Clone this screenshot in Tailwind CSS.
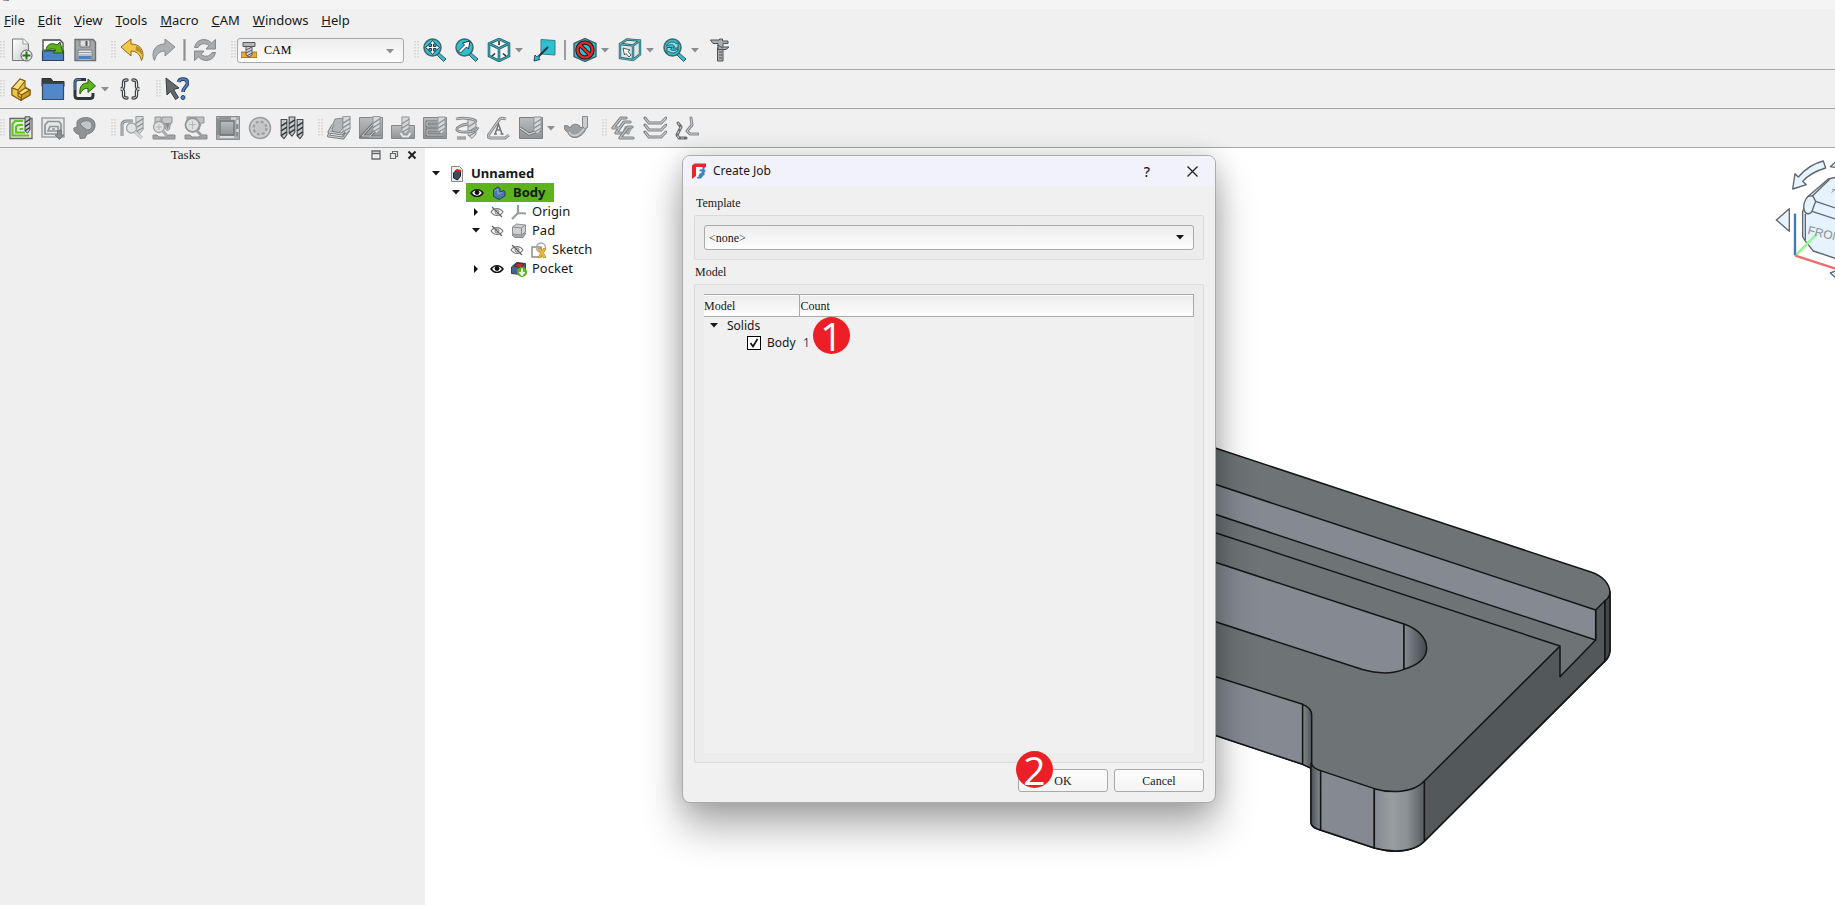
<!DOCTYPE html>
<html lang="en">
<head>
    <meta charset="UTF-8">
    <meta name="viewport" content="width=device-width, initial-scale=1.0">
    <title>CAM - Create Job</title>
    <script src="https://cdn.jsdelivr.net/npm/@tailwindcss/browser@4"></script>
</head>
<body class="relative flex flex-col min-h-screen overflow-hidden bg-[#f0f0f0] text-[13px] text-[#16181a] font-['Noto_Sans',sans-serif]">

    <!-- shared shapes -->
    <svg class="absolute size-0">
        <defs>
            <linearGradient id="page" x1="0" y1="0" x2="1" y2="1"><stop offset="0" stop-color="#fff"/><stop offset="1" stop-color="#c9cbcd"/></linearGradient>
            <linearGradient id="steel" x1="0" y1="0" x2="0" y2="1"><stop offset="0" stop-color="#babdbf"/><stop offset="1" stop-color="#8f9396"/></linearGradient>
            <linearGradient id="slot"><stop offset="0" stop-color="#858a92"/><stop offset="1" stop-color="#44494c"/></linearGradient>
            <linearGradient id="nook"><stop offset="0" stop-color="#85898f"/><stop offset="1" stop-color="#50565a"/></linearGradient>
            <linearGradient id="lip"><stop offset="0" stop-color="#4b5155"/><stop offset="1" stop-color="#858a92"/></linearGradient>
            <linearGradient id="corner"><stop offset="0" stop-color="#858a92"/><stop offset=".35" stop-color="#979da0"/><stop offset=".65" stop-color="#8b9194"/><stop offset="1" stop-color="#575c5f"/></linearGradient>
        </defs>
        <symbol id="drill" viewBox="0 0 10 20">
            <path d="M1 .5h8V15l-4 4.500L1 16z" fill="#d6d8d9" stroke="#8a8e91"/>
            <path d="M1 8l8-5M1 13l8-5M2 17l7-4" stroke="#8a8e91" stroke-width="1.400"/>
        </symbol>
        <symbol id="bit" viewBox="0 0 8 22">
            <path d="M1 1h6v16l-3 4-3-3z" fill="#c7cacc" stroke="#484c50" stroke-width="1.200"/>
            <path d="M1 8l6-4M1 13l6-4M1 18l6-4" stroke="#33373a" stroke-width="1.600"/>
        </symbol>
        <symbol id="lens" viewBox="0 0 24 24">
            <path d="M15 14l8 7-2.500 2.500-7.500-7.500z" fill="#2fc0d0" stroke="#41565a"/>
            <circle cx="9.500" cy="9.500" r="8.500" fill="#2fc0d0" stroke="#41666b" stroke-width="1.500"/>
        </symbol>
        <symbol id="caret" viewBox="0 0 8 5"><path d="M0 0h8L4 4.500z" fill="currentColor"/></symbol>
        <symbol id="eye" viewBox="0 0 14 10">
            <path d="M1 5C4 .5 10 .5 13 5 10 9.500 4 9.500 1 5z" fill="#fff" stroke="#111" stroke-width="1.400"/>
            <circle cx="7" cy="4.500" r="2.400" fill="#111"/>
        </symbol>
        <symbol id="eye-off" viewBox="0 0 14 12">
            <path d="M1 6C4 1.500 10 1.500 13 6 10 10.500 4 10.500 1 6z" fill="none" stroke="#777" stroke-width="1.100"/>
            <circle cx="7" cy="6" r="2" fill="none" stroke="#777"/><path d="M2 1l10 10" stroke="#666" stroke-width="1.200"/>
        </symbol>
        <symbol id="handle" viewBox="0 0 5 18">
            <path d="M1 0v18M4 0v18" stroke="#bfbfbf" stroke-width="1" stroke-dasharray="1.500 1.500"/>
        </symbol>
    </svg>

    <div class="h-[9px] bg-[#f4f4f4]">
        <svg class="ml-[3px] h-px w-[6px]" viewBox="0 0 6 1"><path d="M0 0h3v1H0z" fill="#e88"/><path d="M3 0h3v1H3z" fill="#68a"/></svg>
    </div>

    <nav class="flex h-[22px] items-center gap-[13px] pl-1 pt-px">
        <a href="#"><u>F</u>ile</a>
        <a href="#"><u>E</u>dit</a>
        <a href="#"><u>V</u>iew</a>
        <a href="#"><u>T</u>ools</a>
        <a href="#"><u>M</u>acro</a>
        <a href="#"><u>C</u>AM</a>
        <a href="#"><u>W</u>indows</a>
        <a href="#"><u>H</u>elp</a>
    </nav>

    <!-- file / view toolbar -->
    <div class="flex h-[39px] items-center border-b border-[#a6a6a6] text-[#8a8e91] [&_button]:flex [&_button]:w-8 [&_button]:shrink-0 [&_button]:justify-center [&_button>svg]:size-6">
        <svg class="h-[18px] w-[5px]"><use href="#handle"/></svg>
        <button aria-label="New"><svg viewBox="0 0 24 24"><path d="M3.500 1h11l5 5v16.500h-16z" fill="url(#page)" stroke="#777"/><path d="M14 1v5h5" fill="#fff" stroke="#999"/><circle cx="17.500" cy="17.500" r="5.500" fill="#e9ebe9" stroke="#555"/><path d="M17.500 13.500v8M13.500 17.500h8" stroke="#2f6f1c" stroke-width="2"/></svg></button>
        <button aria-label="Open"><svg viewBox="0 0 24 24"><path d="M2 12V2h17l3 3v8z" fill="#fff" stroke="#444" stroke-width="1.300"/><path d="M1.500 13h21v9.500h-21z" fill="#4a83c6" stroke="#2d4562" stroke-width="1.200"/><path d="M5 13C5 6 11 4 16 7l3-3 3 11H12l3-3c-3-2-7-1-10 1z" fill="#5cb31b" stroke="#2b5c10"/></svg></button>
        <button aria-label="Save"><svg viewBox="0 0 24 24"><path d="M2 1.500h18l2.500 2.500v18.500H2z" fill="#a2a6a9" stroke="#6c7073" stroke-width="1.400"/><path d="M7 2h10v7H7z" fill="#dfe0e1" stroke="#777"/><path d="M12.500 3h2v5h-2z" fill="#555"/><path d="M5 12h14v10H5z" fill="#e3e4e5" stroke="#7b7f82"/><path d="M5.500 18h13v3h-13z" fill="#4a83c6"/><path d="M6 14.500h12M6 17h12" stroke="#999"/></svg></button>
        <svg class="ml-[10px] h-[18px] w-[5px]"><use href="#handle"/></svg>
        <button aria-label="Undo"><svg viewBox="0 0 24 24"><path d="M1 9l10-8v5c8 0 12 5 12 11 0 2-.6 4-1.500 5.500C20 16 16 13 11 13v5z" fill="#f2c84b" stroke="#8a6a18"/><path d="M16 8c5 2 7 6 6.500 11-1-4-4-6-7-6.500z" fill="#b98f2a"/></svg></button>
        <button aria-label="Redo"><svg viewBox="0 0 24 24"><path d="M23 9L13 1v5C5 6 1 11 1 17c0 2 .6 4 1.500 5.500C4 16 8 13 13 13v5z" fill="#aeb1b3" stroke="#86898c"/></svg></button>
        <span class="mx-1 h-5 w-px bg-[#8c8f92] outline-1 outline-[#b5b7b9]"></span>
        <button aria-label="Refresh"><svg viewBox="0 0 24 24" fill="#a9acae" stroke="#85888b"><path d="M1.500 9.500C3 1 13-1 18.500 5l4-3.500v9.500h-9.500l3-3.500C12 4.500 7 5.500 5 9.500z"/><path d="M22.500 14.500C21 23 11 25 5.500 19l-4 3.500V13H11l-3 3.500c4 3 9 2 11-2z"/></svg></button>
        <svg class="ml-[10px] h-[18px] w-[5px]"><use href="#handle"/></svg>
        <div class="relative ml-px">
            <select aria-label="Workbench" class="block h-[25px] w-[167px] appearance-none rounded-[3px] border border-[#a9a9a9] bg-linear-to-b from-[#ededed] to-[#fdfdfd] pl-[26px] font-['Liberation_Serif',serif] text-[12px] text-black"><option>CAM</option></select>
            <svg class="absolute left-1 top-1 size-4" viewBox="0 0 16 16"><path d="M0 10h4l2 2h4l2-2h4v5.500H0z" fill="#eea92f" stroke="#8a6420" stroke-width=".8"/><path d="M2 .5h12v4H2z" fill="#b5b8ba" stroke="#55595c"/><path d="M5 4.500h6V13l-3 2-3-2z" fill="#d0d2d3" stroke="#55595c"/><path d="M5 8l6-3M5 11l6-3M6 14l5-3" stroke="#55595c"/></svg>
            <svg class="absolute right-[10px] top-[11px] h-[5px] w-2"><use href="#caret"/></svg>
        </div>
        <svg class="ml-[10px] h-[18px] w-[5px]"><use href="#handle"/></svg>
        <button aria-label="Fit all"><svg viewBox="0 0 24 24"><use href="#lens"/><path d="M9.500 2.500l3 3.500h-2v2.500H13v-2l3.500 3-3.500 3v-2h-2.500V13h2l-3 3.500-3-3.500h2v-2.500H6v2l-3.500-3 3.500-3v2h2.500V6h-2z" fill="#fff" stroke="#234"/></svg></button>
        <button aria-label="Fit selection"><svg viewBox="0 0 24 24"><use href="#lens"/><path d="M15 3l-1.500 8-2-2-6 6L3.500 13l6-6-2-2z" fill="#fff" stroke="#234"/></svg></button>
        <button aria-label="Axonometric"><svg viewBox="0 0 24 24"><path d="M12 1l10 4.500v12.500L12 23 2 18V5.500z" fill="#f4f6f6" stroke="#2a5f68" stroke-width="2.600"/><path d="M2 5.500l10 5 10-5M12 10.500V23" stroke="#2a5f68" stroke-width="2.600" fill="none"/><path d="M12 1l10 4.500v12.500L12 23 2 18V5.500zM2 5.500l10 5 10-5M12 10.500V23" stroke="#2fb5c4" stroke-width="1" fill="none"/><path d="M12 3v4M5 18l3-2.500M19 18l-3-2.500" stroke="#223" stroke-width="1.500"/></svg></button>
        <svg class="mr-[6px] h-[5px] w-2"><use href="#caret"/></svg>
        <button aria-label="Align view"><svg viewBox="0 0 24 24"><path d="M8 1.500l14 1V17l-14-1z" fill="#2fc0d0" stroke="#3b7c85"/><path d="M15 9l-9 9" stroke="#234" stroke-width="2"/><path d="M1 23l1-6 1.500 1.500 3-1-.5 3 1 1z" fill="#2fc0d0" stroke="#245"/></svg></button>
        <span class="mx-[3px] h-5 w-[2px] bg-[#9b9ea0]"></span>
        <button aria-label="Draw style"><svg viewBox="0 0 24 24"><path d="M12 .5l11 5v13l-11 5-11-5v-13z" fill="#2fc0d0" stroke="#41565a" stroke-width="1.300"/><circle cx="12" cy="12" r="7.500" fill="none" stroke="#222" stroke-width="4.500"/><path d="M7 7l10 10" stroke="#222" stroke-width="4"/><circle cx="12" cy="12" r="7.500" fill="none" stroke="#f0262b" stroke-width="2.200"/><path d="M7 7l10 10" stroke="#f0262b" stroke-width="2.200"/></svg></button>
        <svg class="mr-[5px] h-[5px] w-2"><use href="#caret"/></svg>
        <button aria-label="Bounding box"><svg viewBox="0 0 24 24" fill="none"><path d="M2 6l7-4.500 13 1v14L15 22 2 20z" fill="#dfe6e7"/><path d="M2 6l7-4.500 13 1v14L15 22 2 20zM2 6l13 1.500 7-5M15 7.500V22" stroke="#3e4f53" stroke-width="2.400"/><path d="M2 6l7-4.500 13 1v14L15 22 2 20zM2 6l13 1.500 7-5M15 7.500V22" stroke="#3fb8c5" stroke-width="1.200"/><path d="M5 10l7 2-2 1.500 3 3.500-2 2-3-3.500L6.500 17z" fill="#fff" stroke="#444" stroke-width=".9"/></svg></button>
        <svg class="mr-[5px] h-[5px] w-2"><use href="#caret"/></svg>
        <button aria-label="Sync view"><svg viewBox="0 0 24 24"><use href="#lens"/><path d="M3.500 8c2-5 8-5 10-2l1.500-1.500V10H10l1.500-2C9 6 6 6.500 3.500 8zM15.500 11c-2 5-8 5-10 2L4 14.500V9.500h5L7.500 11.500c2.500 1.500 5 1 8-.5z" fill="#9ad9df" stroke="#2a5961"/></svg></button>
        <svg class="mr-[5px] h-[5px] w-2"><use href="#caret"/></svg>
        <button aria-label="Measure"><svg viewBox="0 0 24 24" fill="#a9adaf" stroke="#4d5255"><path d="M9.500 9.500h5.500v13.500H9.500z"/><path d="M2.500 2h9v-1h3v2h5.500v2.500H15v3.500h6l-3 2.500h-8V5.500H5z"/><path d="M11 14h3M11 17h3M11 20h3M9 7l6 3"/></svg></button>
    </div>

    <!-- structure toolbar -->
    <div class="flex h-[39px] items-center border-b border-[#a6a6a6] text-[#8a8e91] [&_button]:flex [&_button]:w-8 [&_button]:shrink-0 [&_button]:justify-center [&_button>svg]:size-6">
        <svg class="h-[18px] w-[5px]"><use href="#handle"/></svg>
        <button aria-label="Part"><svg viewBox="0 0 24 24" stroke="#7c5d14" stroke-width="1.100" stroke-linejoin="round"><path d="M3 11l8-9 5 2v6l5 3v5l-9 5-9-5z" fill="#eebd3b"/><path d="M3 11l8-9 5 2-7 9z" fill="#fbe07a"/><path d="M3 11l6 2v6l3 2v2.500L3 18z" fill="#f0c542"/><path d="M9 16l7-5 5 2-8 5z" fill="#fbe07a"/><path d="M12.500 18v5l8.500-5v-5z" fill="#d39c28"/></svg></button>
        <button aria-label="Group"><svg viewBox="0 0 24 24"><path d="M1 1.500h9l2 3h11v5H1z" fill="#3b4043" stroke="#2c3032"/><path d="M1.500 6.500h21v16h-21z" fill="#5088c9" stroke="#36495e" stroke-width="1.200"/></svg></button>
        <button aria-label="Link"><svg viewBox="0 0 24 24"><path d="M13 2.500H5C3 2.500 2 3.500 2 5.500v13c0 2 1 3 3 3h12c2 0 3-1 3-3V16" fill="none" stroke="#2f3437" stroke-width="3"/><path d="M8 2.500H5C3 2.500 2 3.500 2 5.500V13" fill="none" stroke="#4a83c6" stroke-width="1.300"/><path d="M7 17C6 9 10 5.500 15 6V2l7.500 7-7.500 6.500v-4C11 11 9 13 7 17z" fill="#5cb31b" stroke="#2b5c10"/></svg></button>
        <svg class="mr-[5px] h-[5px] w-2"><use href="#caret"/></svg>
        <button aria-label="Varset"><svg viewBox="0 0 24 24" fill="none" stroke-linecap="round"><g stroke="#3e4346" stroke-width="3.400"><path d="M9 3C6 3 5.500 4 5.500 6v3c0 2-1 3-3 3 2 0 3 1 3 3v3c0 2 .5 3 3.500 3"/><path d="M15 3c3 0 3.500 1 3.500 3v3c0 2 1 3 3 3-2 0-3 1-3 3v3c0 2-.5 3-3.500 3"/></g><g stroke="#eee" stroke-width="1"><path d="M9 3C6 3 5.500 4 5.500 6v3c0 2-1 3-3 3 2 0 3 1 3 3v3c0 2 .5 3 3.500 3"/><path d="M15 3c3 0 3.500 1 3.500 3v3c0 2 1 3 3 3-2 0-3 1-3 3v3c0 2-.5 3-3.500 3"/></g></svg></button>
        <svg class="ml-[10px] h-[18px] w-[5px]"><use href="#handle"/></svg>
        <button aria-label="What's this"><svg viewBox="0 0 24 24"><path d="M1 1l13 10-5.500 1.500 5 8-3 2-5-8L2 18z" fill="#64696c" stroke="#35393c"/><path d="M13.500 5c1-4 9-4 9 1 0 4-4.500 4-4.500 9" fill="none" stroke="#2b405c" stroke-width="3.600"/><path d="M13.500 5c1-4 9-4 9 1 0 4-4.500 4-4.500 9" fill="none" stroke="#4a83c6" stroke-width="1.800"/><circle cx="18" cy="20.500" r="2" fill="#4a83c6" stroke="#2b405c"/></svg></button>
    </div>

    <!-- CAM toolbar -->
    <div class="flex h-[39px] items-center border-b border-[#a6a6a6] text-[#8a8e91] [&_button]:flex [&_button]:w-8 [&_button]:shrink-0 [&_button]:justify-center [&_button>svg]:size-6">
        <svg class="h-[18px] w-[5px]"><use href="#handle"/></svg>
        <button aria-label="Job"><svg viewBox="0 0 24 24" fill="none"><path d="M1 2.500h22v20H1z" fill="#e6e8e6" stroke="#666" stroke-width="1.300"/><path d="M14 5H6L3.500 8v11.500H20M14 9H9l-2 2v5.500h9M14 13h-3.500v0H14" stroke="#5fc41c" stroke-width="2.200"/><use href="#bit" x="14.500" y="0" width="8" height="18"/></svg></button>
        <button aria-label="Post process"><svg viewBox="0 0 24 24" fill="none"><path d="M1 2h22v19H1z" fill="#e7e8e8" stroke="#a0a3a5" stroke-width="1.600"/><path d="M20 14V8l-2-2.500H7L4 9v9h12M17 13v-2.500H9L7 15h9M11 13h3" stroke="#8f9396" stroke-width="1.700"/><path d="M16.500 14h4v5h2.500l-4.500 4.500L14 19h2.500z" fill="#8a8e91" stroke="#777b7e"/></svg></button>
        <button aria-label="Sanity check"><svg viewBox="0 0 24 24"><path d="M4 6c2-6 19-7 18 4-.4 6-6 8-8 8l-2 4-5 .5-.5-4C3 18 0 15 1 12l3-1z" fill="#8f9396" stroke="#7b7f82"/><path d="M7 8c2-4 12-5 12 1 0 4-3 5-5 5l-4-3z" fill="#c3c6c8" stroke="#7b7f82"/></svg></button>
        <svg class="ml-[10px] h-[18px] w-[5px]"><use href="#handle"/></svg>
        <button aria-label="Inspect"><svg viewBox="0 0 24 24"><use href="#drill" x="15" y="0" width="9" height="18"/><path d="M2 20V9c0-3 2-4 5-4h6" fill="none" stroke="#85898c" stroke-width="3"/><path d="M2 20V9c0-3 2-4 5-4h6" fill="none" stroke="#c6c8ca" stroke-width="1"/><circle cx="11.500" cy="12" r="5" fill="#e2e3e3" stroke="#a3a6a8" stroke-width="1.300"/><path d="M15 16l7 6" stroke="#b5b7b9" stroke-width="3"/><path d="M15 16l7 6" stroke="#e0e0e0" stroke-width="1.400"/></svg></button>
        <button aria-label="Simulator"><svg viewBox="0 0 24 24"><path d="M3 1h6v7H3zM10 1h10v6h-1.500l-1 6-2 2-2-2-1-6H10z" fill="#c6c8ca" stroke="#8f9396"/><path d="M13 7h5l-2.500 7z" fill="#8b8f92"/><path d="M1 19h4l2 2h7l2-2h7v4H1z" fill="#a3a6a9" stroke="#85898c"/><circle cx="7" cy="11" r="5.500" fill="#dfe0e0" stroke="#9da0a2" stroke-width="1.300"/><path d="M11 15l4 5" stroke="#a8abad" stroke-width="3"/><path d="M7 8v6M4 11h6" stroke="#b5b7b9"/></svg></button>
        <button aria-label="GL simulator"><svg viewBox="0 0 24 24"><path d="M3 1h17v6h-3l-2 7-4-3H3z" fill="#c0c2c4" stroke="#8f9396"/><path d="M1 19h5l2 2h7l2-2h6v4H1z" fill="#a3a6a9" stroke="#85898c"/><circle cx="8.500" cy="9" r="7" fill="#dfe0e0" stroke="#94989a" stroke-width="1.800"/><path d="M13 15l6 6" stroke="#9da0a2" stroke-width="3"/><path d="M8.500 5v8M5 8.500h7" stroke="#b5b7b9"/></svg></button>
        <button aria-label="Select loop"><svg viewBox="0 0 24 24"><path d="M.5.5h23v23H.5z" fill="#a8abad" stroke="#8a8e91"/><path d="M4 5h14v14H4z" fill="url(#steel)" stroke="#6f7376" stroke-width="1.300"/><path d="M3 2.500h12M2 3v16M21 8v5M21 16v4" stroke="#8a8e91" stroke-width="2"/><path d="M15 2.500h5M21.500 4v4M21.500 13v3M4 21h14" stroke="#dcdcdc" stroke-width="2"/></svg></button>
        <button aria-label="Toolbit dock"><svg viewBox="0 0 24 24"><circle cx="12" cy="12" r="10.500" fill="#cbcdce" stroke="#9a9da0" stroke-width="1.500"/><circle cx="12" cy="12" r="6.500" fill="#c3c5c6" stroke="#9a9da0" stroke-width="2" stroke-dasharray="3 2.100"/></svg></button>
        <button aria-label="Toolbit library"><svg viewBox="0 0 24 24"><use href="#bit" x="0" y="2.500" width="8" height="21"/><use href="#bit" x="8" y="0" width="8" height="21"/><use href="#bit" x="16" y="2.500" width="8" height="21"/></svg></button>
        <svg class="ml-[10px] h-[18px] w-[5px]"><use href="#handle"/></svg>
        <button aria-label="Profile"><svg viewBox="0 0 24 24" fill="none" stroke-linejoin="round"><path d="M8 3l8-1v10l-4 5-9-2z" fill="#b3b6b8" stroke="#8a8e91"/><path d="M6 9L2 16l13 2 6-7M5 13l-3.500 7L16 22l6-8" stroke="#7f8386" stroke-width="3"/><path d="M6 9L2 16l13 2 6-7M5 13l-3.500 7L16 22l6-8" stroke="#cfd1d2" stroke-width="1"/><use href="#drill" x="15" y="0" width="9" height="18"/></svg></button>
        <button aria-label="Pocket"><svg viewBox="0 0 24 24" fill="none"><path d="M.5 1.500h23v21H.5z" fill="url(#steel)" stroke="#85898c"/><path d="M14 8L3 20h8l7-7M10 21h12" stroke="#74787b" stroke-width="3"/><path d="M14 8L3 20h8l7-7M10 21h12" stroke="#cfd1d2" stroke-width="1"/><use href="#drill" x="13" y="0" width="9" height="18"/></svg></button>
        <button aria-label="Drilling"><svg viewBox="0 0 24 24"><path d="M.5 9.500h23v13H.5z" fill="url(#steel)" stroke="#85898c"/><path d="M9.500 17l2.500 3.500h5l2.500-3.500" stroke="#e6e6e6" stroke-width="2" fill="none"/><use href="#drill" x="10" y="0" width="9" height="19"/></svg></button>
        <button aria-label="Facing"><svg viewBox="0 0 24 24"><path d="M.5 1.500h23v21H.5z" fill="url(#steel)" stroke="#85898c"/><path d="M14 6H4v4h10M14 14H4v5h16" fill="none" stroke="#6f7376" stroke-width="2.800"/><path d="M14 6H4v4h10M14 14H4v5h16" fill="none" stroke="#d0d2d3" stroke-width="1"/><use href="#drill" x="14" y="0" width="9" height="19"/></svg></button>
        <button aria-label="Helix"><svg viewBox="0 0 24 24" fill="none"><use href="#drill" x="12" y="3" width="10" height="20"/><path d="M1 3c8-2 20 0 20 3M13 8C5 9 1 12 2 14c2 3 20 3 21-3M2 22h9" stroke="#7f8386" stroke-width="2.800"/><path d="M1 3c8-2 20 0 20 3M13 8C5 9 1 12 2 14c2 3 20 3 21-3M2 22h9" stroke="#c7c9cb" stroke-width="1"/></svg></button>
        <button aria-label="Engrave"><svg viewBox="0 0 24 24" fill="none"><path d="M19 3c-3-1-6-1-7 1L1.500 19c-1 2 0 3 2 3H18l4-3" stroke="#85898c" stroke-width="2.800"/><path d="M19 3c-3-1-6-1-7 1L1.500 19c-1 2 0 3 2 3H18l4-3" stroke="#d3d5d6" stroke-width="1"/><path d="M8 18l3.500-10L15 18M9.500 14h4M7 18h3M13.500 18h3" stroke="#74787b" stroke-width="1.500"/></svg></button>
        <button aria-label="Adaptive"><svg viewBox="0 0 24 24"><path d="M.5 1.500h23v21H.5z" fill="url(#steel)" stroke="#7c8083"/><path d="M1 12l9 6 12-4" fill="none" stroke="#74787b" stroke-width="3"/><path d="M1 12l9 6 12-4" fill="none" stroke="#d0d2d3" stroke-width="1.200"/><use href="#drill" x="14" y="0" width="9" height="19"/></svg></button>
        <svg class="mr-[5px] h-[5px] w-2"><use href="#caret"/></svg>
        <button aria-label="3D surface"><svg viewBox="0 0 24 24"><path d="M0 10c3-1 5 0 6 2 2-5 9-5 11 0 2-2 4-3 6-2-1 4-4 9-9 11-6 2-10-2-10-5-2 0-4-3-4-6z" fill="#9da0a3" stroke="#7b7f82"/><path d="M5 16c2 4 7 5 11 1l5-5" fill="none" stroke="#d0d2d3" stroke-width="1.500"/><path d="M18.500.5h5v11l-3 1-2-2z" fill="#ccc" stroke="#85898c"/></svg></button>
        <svg class="ml-[10px] h-[18px] w-[5px]"><use href="#handle"/></svg>
        <button aria-label="Array"><svg viewBox="0 0 24 24" fill="none" stroke-linecap="round" stroke-linejoin="round"><path d="M11 17l3-7h8l-4 9z" fill="#a5a8aa"/><path d="M15 2h-5L2 12h6M19 6h-6L5 17h5M21 11h-4L9 22h13" stroke="#7d8184" stroke-width="3.200"/><path d="M15 2h-5L2 12h6M19 6h-6L5 17h5M21 11h-4L9 22h13" stroke="#c9cbcd" stroke-width="1.200"/></svg></button>
        <button aria-label="Copy operation"><svg viewBox="0 0 24 24" fill="none"><path d="M2 2l4 5h12l5-5M2 9l4 5h12l5-5M2 16l4 5h12l5-5" stroke="#7d8184" stroke-width="3" stroke-linecap="round"/><path d="M2 2l4 5h12l5-5M2 9l4 5h12l5-5M2 16l4 5h12l5-5" stroke="#d0d2d3" stroke-width="1.100"/></svg></button>
        <button aria-label="Simple copy"><svg viewBox="0 0 24 24" fill="none" stroke-linecap="round" stroke-linejoin="round"><path d="M3 7l3 4-4 8 2 3h7" stroke="#64686b" stroke-width="3"/><path d="M3 7l3 4-4 8 2 3h7" stroke="#c3c5c7" stroke-width="1.200" stroke-dasharray="2 3"/><path d="M16 2l1 7-5 6 3 3h8" stroke="#85898c" stroke-width="3"/><path d="M16 2l1 7-5 6 3 3h8" stroke="#d0d2d3" stroke-width="1"/></svg></button>
    </div>

    <main class="flex flex-1">
        <aside class="w-[425px] shrink-0 bg-[#efefef]">
            <div class="flex h-[14px] items-center pr-2 font-['Liberation_Serif',serif] text-[13px]">
                <span class="flex-1 text-center">Tasks</span>
                <div class="flex gap-2">
                    <button aria-label="Collapse"><svg class="size-[10px]" viewBox="0 0 10 10"><path d="M1 1h8v8H1zM1 3.500h8" fill="none" stroke="#666b6e" stroke-width="1.300"/></svg></button>
                    <button aria-label="Float"><svg class="size-[10px]" viewBox="0 0 10 10"><path d="M3.500 3.500V1.500h5v5h-2M1.500 3.500h5v5h-5z" fill="none" stroke="#666b6e" stroke-width="1.200"/></svg></button>
                    <button aria-label="Close panel"><svg class="size-[10px]" viewBox="0 0 10 10"><path d="M1.500 1.500l7 7M8.500 1.500l-7 7" stroke="#222" stroke-width="2"/></svg></button>
                </div>
            </div>
        </aside>

        <section class="relative flex-1 overflow-hidden bg-white">
            <!-- 3D view -->
            <svg class="absolute left-0 top-0 h-[757px] w-[1410px]" viewBox="0 0 1410 757">
                <g transform="translate(785 282) scale(.33333)" stroke="#151515" stroke-width="4.500" stroke-linejoin="round">
                    <path d="M-30 39L1145 427C1175 437 1200 460 1200 490V662C1198 680 1190 690 1182 697L645 1232C620 1260 570 1268 530 1262 515 1260 505 1257 493 1254L330 1200C312 1195 303 1185 303 1178V1015L278 1003-30 901z" fill="#6e7376"/>
                    <path d="M643 1053L1050 648V740L1157 630V540L1185 512V692L643 1234z" fill="#53585b"/>
                    <path d="M1185 512C1195 505 1200 497 1200 485V662C1198 680 1192 688 1185 692z" fill="#41474a"/>
                    <path d="M-30 148L1157 540V630L-30 238z" fill="#858a92"/>
                    <path d="M-30 293L1050 648" fill="none"/>
                    <path d="M-30 382L582 582V718C540 735 490 728 455 718L-30 560z" fill="#858a92"/>
                    <path d="M582 582C625 597 650 625 650 655 650 685 625 705 582 718z" fill="url(#slot)"/>
                    <path d="M-30 725L278 823V1003L-30 901z" fill="#858a92"/>
                    <path d="M278 823C295 830 305 840 305 855V1015L278 1003z" fill="url(#nook)"/>
                    <path d="M303 1000C308 1012 318 1018 332 1022V1200C312 1195 303 1185 303 1178z" fill="url(#lip)"/>
                    <path d="M332 1022L493 1076V1254L332 1200z" fill="#858a92"/>
                    <path d="M493 1076C540 1090 610 1090 643 1053V1234C615 1265 550 1270 493 1254z" fill="url(#corner)"/>
                </g>
                <!-- navigation cube -->
                <g transform="translate(1310 -8) scale(.33333)" fill="#e6f2fd" stroke="#5d666d" stroke-width="4" stroke-linejoin="round">
                    <path d="M265 63L272 84C245 92 220 105 203 124L214 134 173 147 180 101 190 111C210 88 235 70 265 63z"/>
                    <path d="M124 240L163 206V274z"/>
                    <path d="M286 80L310 58V84zM286 399L310 390V420z"/>
                    <path d="M203 215L218 170 280 117 310 110V358L235 333 210 302 203 290z"/>
                    <path d="M218 170C208 180 203 200 208 212S225 224 231 214L242 184 233 167z"/>
                    <path d="M233 167L284 118M242 184L310 207M231 214L310 240M211 222V300" fill="none"/>
                    <path d="M290 158L300 146M292 148l10 3" stroke="#8a9096" stroke-width="3"/>
                    <path d="M183 345L246 282" stroke="#98f598" stroke-width="8"/>
                    <text x="216" y="281" font-family="Liberation Sans" font-size="36" fill="#8a9096" stroke="none" transform="rotate(14 216 281)">FRONT</text>
                    <path d="M180 346V221" stroke="#4277bd" stroke-width="7"/>
                    <path d="M181 347L310 389" stroke="#f16c6c" stroke-width="7"/>
                </g>
            </svg>

            <!-- document tree -->
            <ul class="relative w-max pl-[5px] pt-4 [&_li]:flex [&_li]:h-[19px] [&_li]:items-center">
                <li><svg class="ml-[2px] mr-[11px] h-[5px] w-2"><use href="#caret"/></svg><svg class="mr-2 h-4 w-3" viewBox="0 0 12 16"><path d="M.5.5h8l3 3v12H.5z" fill="#eee" stroke="#888"/><path d="M2.500 7l3-3 4 1v5l-3 4-4-2z" fill="#3f4c5c" stroke="#222"/><path d="M3.500 5l2.500-2 4 1v2z" fill="#d22"/></svg><b>Unnamed</b></li>
                <li><svg class="ml-[22px] mr-[6px] h-[5px] w-2"><use href="#caret"/></svg><span class="flex h-[19px] items-center bg-[#5cb31b] pl-1 pr-[9px]"><svg class="mr-2 h-[10px] w-[14px]"><use href="#eye"/></svg><svg class="mr-[7px] size-[14px]" viewBox="0 0 14 14"><path d="M1.500 4l4-3 2.500 1.500V6l4-1.500L13 6v4l-6 3.500-5.500-3z" fill="#4d78ad" stroke="#26415f"/><path d="M3 5l3-2v5l4-1.500" fill="none" stroke="#8fb2dd"/></svg><b>Body</b></span></li>
                <li><svg class="ml-[43px] mr-2 h-2 w-[6px]" viewBox="0 0 6 8"><path d="M1 0l4 4-4 4z" fill="#111"/></svg><svg class="ml-[3px] mr-[7px] h-3 w-[14px]"><use href="#eye-off"/></svg><svg class="mr-[5px] size-4" viewBox="0 0 16 16"><path d="M7 1v8l8 .5M7 9l-6 6" stroke="#999d9f" stroke-width="2.200" fill="none"/></svg>Origin</li>
                <li><svg class="ml-[42px] mr-[10px] h-[5px] w-2"><use href="#caret"/></svg><svg class="mr-[7px] h-3 w-[14px]"><use href="#eye-off"/></svg><svg class="mr-[5px] size-4" viewBox="0 0 16 16"><path d="M1 12l4-2h10l-3 4.500H4z" fill="#aaadaf" stroke="#888"/><path d="M1.500 4l4-3 9 1v7l-4 3-9-1z" fill="#cfd1d2" stroke="#8b8f92"/><path d="M1.500 4l9 1 4-3M10.500 5v7" fill="none" stroke="#8b8f92"/></svg>Pad</li>
                <li><svg class="ml-[80px] mr-[7px] h-3 w-[14px]"><use href="#eye-off"/></svg><svg class="mr-[5px] size-4" viewBox="0 0 16 16"><path d="M1 5h9v10H1z" fill="none" stroke="#8b8f92" stroke-width="1.500"/><circle cx="10" cy="5.500" r="4.500" fill="none" stroke="#a5a8aa" stroke-width="1.500"/><path d="M7 6.500h3l1 2.500 1.500-2.500h2.500l-2.500 4.500 2.500 4.500h-3l-1-2.500-1.500 2.500H7l2.500-4.500z" fill="#f3bd36" stroke="#b98718" stroke-width=".7"/></svg>Sketch</li>
                <li><svg class="ml-[43px] mr-2 h-2 w-[6px]" viewBox="0 0 6 8"><path d="M1 0l4 4-4 4z" fill="#111"/></svg><svg class="ml-[3px] mr-[7px] h-[10px] w-[14px]"><use href="#eye"/></svg><svg class="mr-[5px] size-4" viewBox="0 0 16 16"><path d="M.5 6l5-4.500 9 1v7l-5 4-9-1z" fill="#46648c" stroke="#2b3f5a"/><path d="M3 5l4-3 6 1-3 4z" fill="#d8232a" stroke="#333"/><circle cx="11" cy="11" r="5" fill="#5cb31b"/><path d="M11 7.500v6M8.500 11l2.500 3 2.500-3" fill="none" stroke="#fff" stroke-width="1.700"/></svg>Pocket</li>
            </ul>
        </section>
    </main>

    <!-- Create Job dialog -->
    <div role="dialog" aria-labelledby="dialog-title" class="absolute left-[682px] top-[155px] w-[534px] rounded-[8px] border border-[#a9abac] bg-[#f0f0f0] font-['Liberation_Serif',serif] text-[12px] shadow-[0_24px_40px_rgba(0,0,0,0.32),0_0_24px_rgba(0,0,0,0.16)]">
        <header class="flex h-[30px] items-center rounded-t-[7px] bg-[#f2f3fa] pl-2 pr-4 font-['Noto_Sans',sans-serif]">
            <svg class="mr-[6px] size-4" viewBox="0 0 16 16"><path d="M1 16V2.500L3.500.5H15V4l-2 1H5v8z" fill="#e8262c"/><path d="M12 4.500l1.500.5V7l1.500 1-1.500 1v2l-2 .5L10 13l-1.500-1V7z" fill="#4380c4"/><path d="M9 11l2-1 3 1-2 2-2 2.500H6V13z" fill="#4380c4"/><path d="M5 4h6.500v2.200H7.500v2h3v2h-3V14H5z" fill="#fff"/></svg>
            <h1 id="dialog-title" class="flex-1 text-[12px]">Create Job</h1>
            <button aria-label="Help" class="mr-[31px] w-4 text-[14px] font-medium">?</button>
            <button aria-label="Close"><svg class="size-[13px]" viewBox="0 0 13 13"><path d="M1.500 1.500l10 10M11.500 1.500l-10 10" stroke="#222" stroke-width="1.300"/></svg></button>
        </header>
        <div class="px-[11px] pb-[10px] pt-[9px]">
            <label for="template" class="block h-5 pl-[2px] leading-4">Template</label>
            <div class="relative rounded-[2px] border border-[#dadada] bg-[#ececec] px-[9px] py-[9px]">
                <select id="template" class="block h-[25px] w-full appearance-none rounded-[3px] border border-[#a9a9a9] bg-linear-to-b from-[#ededed] to-[#fdfdfd] pl-1"><option>&lt;none&gt;</option></select>
                <svg class="absolute right-[19px] top-[19px] h-[5px] w-2"><use href="#caret"/></svg>
            </div>
            <h2 class="mt-1 h-5 pl-px leading-4">Model</h2>
            <div class="min-h-[478px] rounded-[2px] border border-[#dadada] bg-[#ececec] p-[9px]">
                <div class="min-h-[459px] bg-[#f0f0f0]">
                    <table class="w-full table-fixed">
                        <thead>
                            <tr class="h-[22px] border-y border-r border-[#a9a9a9] bg-linear-to-b from-[#ededed] to-[#fdfdfd] text-left">
                                <th class="w-[95px] border-r border-[#a9a9a9] font-normal">Model</th>
                                <th class="pl-px font-normal">Count</th>
                            </tr>
                        </thead>
                        <tbody class="font-['Noto_Sans',sans-serif] leading-[17px]">
                            <tr>
                                <td><span class="flex items-center pl-[6px]"><svg class="mr-[9px] h-[5px] w-2"><use href="#caret"/></svg>Solids</span></td>
                                <td></td>
                            </tr>
                            <tr>
                                <td><label class="flex items-center whitespace-nowrap pl-[43px]">
                                    <input type="checkbox" checked class="size-[14px] appearance-none border border-black bg-white">
                                    <svg class="-ml-3 mr-[8px] size-[10px]" viewBox="0 0 10 10"><path d="M1.500 5l2.500 3.500L8.500 1" fill="none" stroke="#111" stroke-width="1.700"/></svg>Body</label></td>
                                <td class="pl-1 text-[#3d4a66]">1</td>
                            </tr>
                        </tbody>
                    </table>
                </div>
            </div>
            <footer class="mt-[6px] flex justify-end gap-[6px]">
                <button class="h-[23px] w-[90px] rounded-[3px] border border-[#a9a9a9] bg-linear-to-b from-[#fdfdfd] to-[#f4f4f4]">OK</button>
                <button class="h-[23px] w-[90px] rounded-[3px] border border-[#a9a9a9] bg-linear-to-b from-[#fdfdfd] to-[#f4f4f4]">Cancel</button>
            </footer>
        </div>

        <!-- step markers -->
        <span class="absolute left-[130px] top-[161px] flex size-[37px] items-center justify-center rounded-full bg-[#ec1f26] font-['Open_Sans',sans-serif] text-[39px] leading-none text-white">1</span>
        <span class="absolute left-[333px] top-[595px] flex size-[37px] items-center justify-center rounded-full bg-[#ec1f26] font-['Open_Sans',sans-serif] text-[39px] leading-none text-white">2</span>
    </div>
</body>
</html>
